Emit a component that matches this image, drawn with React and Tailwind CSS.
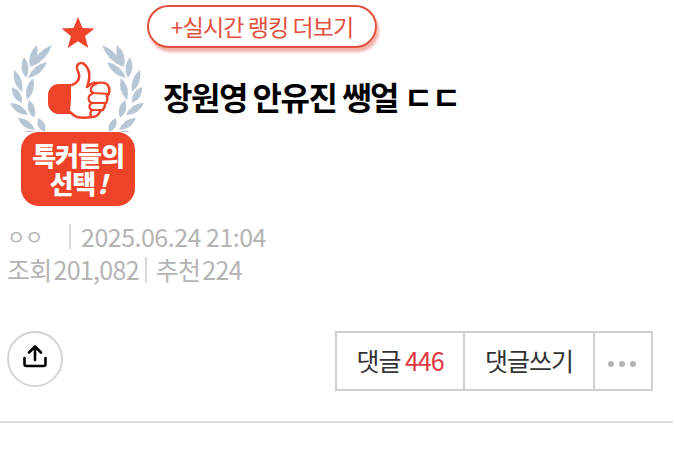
const leaves = [
  [30, 67, 37, 45],
  [31, 67, 52, 45],
  [26, 78, 24, 57],
  [28, 78, 47, 62],
  [22, 92, 14, 70],
  [27, 100, 33, 78],
  [22, 103, 12, 87],
  [34, 118, 29, 100],
  [28, 115, 10, 103],
  [45, 132, 38, 118],
  [35, 130, 18, 118],
  [38, 135, 22, 133],
];

// one leaf of the wreath, from base to tip
const leafPath = (x1, y1, x2, y2, w) => {
  const mx = (x1 + x2) / 2;
  const my = (y1 + y2) / 2;
  const dx = x2 - x1;
  const dy = y2 - y1;
  const len = Math.hypot(dx, dy);
  const nx = (-dy / len) * w;
  const ny = (dx / len) * w;
  return `M${x1} ${y1}Q${mx + nx} ${my + ny} ${x2} ${y2}Q${mx - nx} ${my - ny} ${x1} ${y1}Z`;
};

const Emblem = () => {
  return (
    <div className="w-[140px] shrink-0 flex flex-col">
      <svg width="140" height="127" viewBox="7 5 140 127" className="shrink-0">
        <path d="M78 17l4.500 11 12 .5-9.500 7.500 3.300 12-10.300-6.800-10.300 6.800 3.300-12-9.500-7.500 12-.5z" fill="#ee4229" />
        {leaves.map((l, i) => (
          <g key={i} fill="#b7c6d5">
            <path d={leafPath(l[0], l[1], l[2], l[3], 7)} />
            <path d={leafPath(154 - l[0], l[1], 154 - l[2], l[3], 7)} />
          </g>
        ))}
        <path d="M71 84h-12a11 11 0 0 0-11 11v8a11 11 0 0 0 11 11h12z" fill="#ee4229" />
        <path
          d="M72 85c5-2 8-6 7-11-1-3-3-5-2-8 1-3 5-4 7-2 5 4 7 12 3 23 3-3 7-5 11-4 5-1 10 0 11 5 1 3 0 6-2 8 1 3 0 6-2 8 0 4-2 6-5 7-1 4-4 6-8 6-6 1-11 1-15 0-3-1-5-3-7-5"
          fill="#fff"
          stroke="#ee4229"
          strokeWidth="2.500"
          strokeLinejoin="round"
          strokeLinecap="round"
        />
        <path
          d="M96 84c-6 2-7 8-2 9l15 1M92 94c-5 2-4 8 0 9l14 0M92 103c-4 2-3 7 1 7l10 0M92 110c-2 2-2 4-1 6"
          fill="none"
          stroke="#ee4229"
          strokeWidth="2.200"
          strokeLinecap="round"
        />
      </svg>
      <div className="ml-[14px] w-[114px] h-[74px] rounded-[18px] bg-[#ee4229] flex flex-col items-center justify-center text-white font-black text-[26px] leading-[28px] tracking-[-1px]">
        <span>톡커들의</span>
        <span>
          선택<i className="ml-[2px]">!</i>
        </span>
      </div>
    </div>
  );
};

const App = () => {
  return (
    <div className="w-[675px] h-[454px] overflow-hidden bg-white font-['Noto_Sans_CJK_KR','Noto_Sans',sans-serif]">
      <div className="w-[673px] border-b-2 border-[#dcdcdc] h-[423px] pt-[5px] px-[7px]">
        {/* === Header === */}
        <div className="flex h-[203px]">
          <Emblem />
          <div className="flex flex-col items-start">
            <a className="flex items-center justify-center w-[230px] h-[43px] border-2 border-[#e2503c] rounded-full text-[#e2503c] text-[23px] tracking-[-0.9px] shadow-[2px_4px_3px_rgba(226,80,60,0.45)]">
              +실시간 랭킹 더보기
            </a>
            <h1 className="mt-[26px] ml-[16px] text-[32px] leading-[44px] font-bold text-black tracking-[-1.5px]">
              장원영 안유진 쌩얼 ㄷㄷ
            </h1>
          </div>
        </div>

        {/* === Meta === */}
        <div className="mt-[12px] text-[#b4b4b4] text-[25px] leading-[33px] tracking-[-0.5px]">
          <div className="flex items-center">
            <span className="w-[62px] text-[20px]">ㅇㅇ</span>
            <span className="w-[2px] h-[25px] bg-[#d8d8d8] mr-[10px]" />
            <span>2025.06.24 21:04</span>
          </div>
          <div className="flex items-center tracking-[-0.7px] [word-spacing:-3px]">
            <span>조회 201,082</span>
            <span className="w-[2px] h-[26px] bg-[#d8d8d8] ml-[6px] mr-[9px]" />
            <span>추천 224</span>
          </div>
        </div>

        {/* === Actions === */}
        <div className="mt-[45px] flex justify-between items-start pr-[13px]">
          <button className="w-[56px] h-[56px] rounded-full border-2 border-[#d4d4d4] flex items-center justify-center">
            <svg width="28" height="28" viewBox="0 0 28 28" fill="none" stroke="#000" strokeWidth="2.600" strokeLinecap="round" strokeLinejoin="round" className="-mt-[2px]">
              <path d="M14 16V3M8 8.500L14 2.500L20 8.500M3.500 14v6a2 2 0 0 0 2 2h17a2 2 0 0 0 2-2v-6" />
            </svg>
          </button>
          <div className="flex h-[60px] border-2 border-[#cfcfcf] text-[#333] text-[25px] tracking-[-1px]">
            <button className="w-[128px] border-r-2 border-[#cfcfcf]">
              댓글 <span className="text-[#e0373f]">446</span>
            </button>
            <button className="w-[130px] border-r-2 border-[#cfcfcf]">댓글쓰기</button>
            <button className="w-[56px] flex items-center justify-center gap-[5px] pt-[5px] pr-[3px]">
              <span className="w-[6px] h-[6px] rounded-full bg-[#b4b4b4]" />
              <span className="w-[6px] h-[6px] rounded-full bg-[#b4b4b4]" />
              <span className="w-[6px] h-[6px] rounded-full bg-[#b4b4b4]" />
            </button>
          </div>
        </div>
      </div>
    </div>
  );
};

export default App;
